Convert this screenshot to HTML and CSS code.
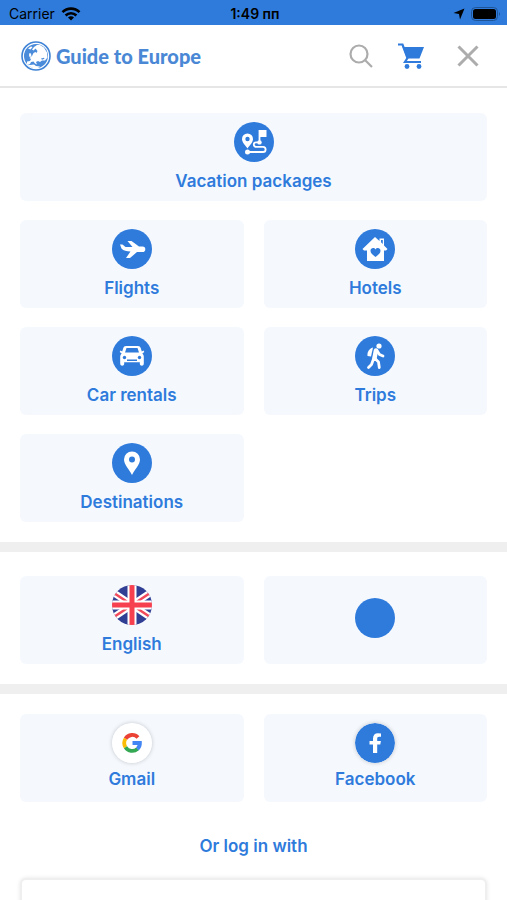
FILE: index.html
```html
<!DOCTYPE html>
<html lang="en">
<head>
    <meta charset="UTF-8">
    <meta name="viewport" content="width=device-width, initial-scale=1.0">
    <title>Guide to Europe</title>
    <link rel="stylesheet" href="styles.css">
</head>
<body>
    <div class="screen">
        <div class="status-bar">
            <div class="status-left">
                <span>Carrier</span>
                <svg width="20" height="14" viewBox="0 0 20 14" fill="none" stroke="#000" stroke-width="2.6">
                    <path d="M1.5 5.2a12 12 0 0 1 17 0M4.6 8.5a7.6 7.6 0 0 1 10.8 0"/>
                    <path d="M10 13.6l-3-3a4.2 4.2 0 0 1 6 0z" fill="#000" stroke="none"/>
                </svg>
            </div>
            <span class="status-time">1:49 пп</span>
            <div class="status-right">
                <svg width="12" height="12" viewBox="0 0 12 12"><path d="M11.5.5L7 11.5l-1-5.500-5.500-1z"/></svg>
                <svg width="30" height="14" viewBox="0 0 30 14">
                    <rect x=".5" y=".5" width="26" height="13" rx="4" fill="none" stroke="#1f5597"/>
                    <rect x="2" y="2" width="23" height="10" rx="2.5"/>
                    <path d="M28 5q2 2 0 4z" fill="#1f5597"/>
                </svg>
            </div>
        </div>

        <header class="header">
            <a href="#" class="logo">
                <svg width="30" height="30" viewBox="0 0 30 30">
                    <circle cx="15" cy="15" r="14" fill="#fff" stroke="#3f83d6" stroke-width="1.6"/>
                    <circle cx="15" cy="15" r="12" fill="#4a8bda"/>
                    <path d="M16 4l3 0 4 2.500 3 5 .5 5-2.500 3-3 0-2 1.500-2-1-2 1 1 2.500-2-1-1.500-2-2.500.5-1 2-3 .5 0-3 3-.5 1-2-1.500-1 2.500-2 1.500-3 2-1 1 1 1-2-2-2.500-2 2-1.500-1 2-2.500z" fill="#fff"/>
                    <path d="M7 7.500l3-2 1.500.5-2 2.500zM8.500 12l1.500.5.5 3-2 .5-.5-2zM6 23l3 1 4-.5 2 1.500 4 .5-2 1.500-5 0-4-2z" fill="#fff"/>
                    <path d="M20 17.500l3-.8.5 1-2.500 1z" fill="#4a8bda"/>
                </svg>
                <span>Guide to Europe</span>
            </a>
            <nav class="header-actions">
                <button type="button" aria-label="Search">
                    <svg width="24" height="24" viewBox="0 0 24 24" fill="none" stroke="#acacac" stroke-width="2.2">
                        <circle cx="10" cy="10" r="8.5"/>
                        <path d="M16 16l7 7"/>
                    </svg>
                </button>
                <button type="button" aria-label="Cart">
                    <svg width="28" height="26" viewBox="0 0 28 26">
                        <path d="M1 1.500h4.500l5 13.500-2.500 4H24" fill="none" stroke="#2f7bdc" stroke-width="2.2"/>
                        <path d="M5.500 4H27l-4.500 11.500H10z" fill="#2f7bdc"/>
                        <circle cx="10" cy="23.500" r="2.400" fill="#2f7bdc"/>
                        <circle cx="22" cy="23.500" r="2.400" fill="#2f7bdc"/>
                    </svg>
                </button>
                <button type="button" aria-label="Close">
                    <svg width="22" height="22" viewBox="0 0 22 22" stroke="#acacac" stroke-width="3"><path d="M1.500 1.500l19 19M20.500 1.500l-19 19"/></svg>
                </button>
            </nav>
        </header>

        <main>
            <section class="grid menu">
                <a href="#" class="tile wide">
                    <svg class="icon" viewBox="0 0 40 40">
                        <circle cx="20" cy="20" r="20" fill="#2f7bdc"/>
                        <path d="M13.500 11.500A5.500 5.500 0 0 0 8 17c0 3.500 3.500 6.500 5.500 9.500 2-3 5.500-6 5.500-9.500a5.500 5.500 0 0 0-5.500-5.500z" fill="#fff"/>
                        <circle cx="13.500" cy="17" r="2.200" fill="#2f7bdc"/>
                        <path d="M13.500 30H29a2.600 2.600 0 0 0 0-5.200h-7a2.200 2.200 0 0 1 0-4.400h3.500V8" fill="none" stroke="#fff" stroke-width="1.800"/>
                        <path d="M25 8h7.500v7H25z" fill="#fff"/>
                        <circle cx="13.500" cy="30" r="2.500" fill="#fff"/>
                        <circle cx="25.500" cy="20.400" r="2.200" fill="#fff"/>
                    </svg>
                    <span>Vacation packages</span>
                </a>
                <a href="#" class="tile">
                    <svg class="icon" viewBox="0 0 40 40">
                        <circle cx="20" cy="20" r="20" fill="#2f7bdc"/>
                        <path d="M8 15.500h2.500l3 2.500h7l-5-6h4l7.500 5.500h3.500a2.800 2.800 0 0 1 0 5.600H25L18 29h-4l4.500-6.500c-4 0-7-.8-9-3z" fill="#fff"/>
                    </svg>
                    <span>Flights</span>
                </a>
                <a href="#" class="tile">
                    <svg class="icon" viewBox="0 0 40 40">
                        <circle cx="20" cy="20" r="20" fill="#2f7bdc"/>
                        <path d="M20 8l4.500 4V9.500H29v7l3.500 3.500-1.500 1.500h-2V32H12V21.500H9L7.500 20z" fill="#fff"/>
                        <path d="M26 11h1.800v4L26 13.300zM20.500 28c-3-2.600-5-4-5-6.300 0-2.800 3.700-3.600 5-1.200 1.300-2.400 5-1.600 5 1.200 0 2.300-2 3.700-5 6.300z" fill="#2f7bdc"/>
                    </svg>
                    <span>Hotels</span>
                </a>
                <a href="#" class="tile">
                    <svg class="icon" viewBox="0 0 40 40">
                        <circle cx="20" cy="20" r="20" fill="#2f7bdc"/>
                        <path d="M14 10h12c1.500 0 2.300.8 2.700 2l1.100 3.500 1.700-1 .8 1.500-2 1.500c1 1 1.500 2 1.500 3.500v6.500c0 3-4 3-4 0v-1.300H12.200v1.300c0 3-4 3-4 0V21c0-1.500.5-2.500 1.500-3.500L7.700 16l.8-1.500 1.700 1 1.100-3.500c.4-1.200 1.200-2 2.700-2z" fill="#fff"/>
                        <path d="M14.500 12h11l1.500 4.500H13zM15 23.500h10V25H15z" fill="#2f7bdc"/>
                        <circle cx="12.500" cy="21.500" r="1.700" fill="#2f7bdc"/>
                        <circle cx="27.500" cy="21.500" r="1.700" fill="#2f7bdc"/>
                    </svg>
                    <span>Car rentals</span>
                </a>
                <a href="#" class="tile">
                    <svg class="icon" viewBox="0 0 40 40">
                        <circle cx="20" cy="20" r="20" fill="#2f7bdc"/>
                        <circle cx="24" cy="10" r="2.600" fill="#fff"/>
                        <path d="M18 11.500c-4 1-6 5-5.500 8.500l3.500.5z" fill="#fff"/>
                        <g fill="none" stroke="#fff" stroke-linecap="round" stroke-linejoin="round">
                            <path d="M21 14.500l-1.500 7.500" stroke-width="4.500"/>
                            <path d="M22 14.500l2.500 4 3.500 1.500M20 22.500l3.500 3.500.8 5.500M18.500 23l-2 5.500-3 3" stroke-width="2.800"/>
                        </g>
                    </svg>
                    <span>Trips</span>
                </a>
                <a href="#" class="tile">
                    <svg class="icon" viewBox="0 0 40 40">
                        <circle cx="20" cy="20" r="20" fill="#2f7bdc"/>
                        <path d="M20 8.500a8 8 0 0 0-8 8c0 5 5 9.500 8 15.500 3-6 8-10.500 8-15.500a8 8 0 0 0-8-8z" fill="#fff"/>
                        <circle cx="20" cy="16.500" r="3" fill="#2f7bdc"/>
                    </svg>
                    <span>Destinations</span>
                </a>
            </section>

            <section class="grid settings">
                <a href="#" class="tile">
                    <svg class="icon" viewBox="0 0 40 40">
                        <clipPath id="flag"><circle cx="20" cy="20" r="20"/></clipPath>
                        <g clip-path="url(#flag)">
                            <path d="M0 0h40v40H0z" fill="#303e94"/>
                            <path d="M-4 4l48 32M44 4L-4 36" stroke="#fff" stroke-width="7"/>
                            <path d="M-4 4l24 16M44 4L20 20M-4 36l24-16M44 36L20 20" stroke="#f04a5c" stroke-width="2.500"/>
                            <path d="M20 0v40M0 20h40" stroke="#fff" stroke-width="9"/>
                            <path d="M20 0v40M0 20h40" stroke="#f6404f" stroke-width="5"/>
                        </g>
                    </svg>
                    <span>English</span>
                </a>
                <a href="#" class="tile icon-only" aria-label="Currency">
                    <svg class="icon" viewBox="0 0 40 40"><circle cx="20" cy="20" r="20" fill="#2f7bdc"/></svg>
                </a>
            </section>

            <section class="login">
                <div class="grid">
                    <a href="#" class="tile">
                        <svg class="icon raised" viewBox="0 0 40 40">
                            <circle cx="20" cy="20" r="20" fill="#fff"/>
                            <g fill="none" stroke-width="3.800">
                                <path d="M13.500 15.800a7.800 7.800 0 0 1 12.500-1.300" stroke="#ea4335"/>
                                <path d="M13.500 24.200a7.800 7.800 0 0 1 0-8.400" stroke="#fbbc05"/>
                                <path d="M13.500 24.200a7.800 7.800 0 0 0 12 1.600" stroke="#34a853"/>
                                <path d="M20.500 20h7.400a7.800 7.800 0 0 1-2.500 6" stroke="#4285f4"/>
                            </g>
                        </svg>
                        <span>Gmail</span>
                    </a>
                    <a href="#" class="tile">
                        <svg class="icon raised" viewBox="0 0 40 40">
                            <circle cx="20" cy="20" r="20" fill="#2f7bdc"/>
                            <path d="M18 30v-8.500h-3.500V18H18v-2.500c0-3.500 2-5.300 5-5.300l3 .3v3.300h-1.800c-1.700 0-2 .9-2 2.200v2h3.700l-.6 3.500h-3.100V30z" fill="#fff"/>
                        </svg>
                        <span>Facebook</span>
                    </a>
                </div>
                <label class="login-label" for="email">Or log in with</label>
                <input type="email" id="email" class="login-input">
            </section>
        </main>
    </div>
</body>
</html>
```
FILE: styles.css
```css
* {
    box-sizing: border-box;
}

body {
    margin: 0;
    font-family: Inter, 'Liberation Sans', sans-serif;
    background-color: #fff;
    color: #2f7bdc;
}

a {
    color: inherit;
    text-decoration: none;
}

svg {
    display: block;
}

.screen {
    height: 100vh;
    overflow: hidden;
}

.status-bar {
    display: grid;
    grid-template-columns: 1fr auto 1fr;
    align-items: center;
    height: 25px;
    padding: 2px 6px 0 9px;
    background-color: #2f7bdc;
    color: #000;
    font-size: 14px;
}

.status-left, .status-right {
    display: flex;
    align-items: center;
    gap: 6px;
}

.status-right {
    justify-content: flex-end;
}

.status-time {
    font-weight: 600;
}

.header {
    display: flex;
    align-items: center;
    justify-content: space-between;
    height: 63px;
    padding: 0 28px 0 21px;
    border-bottom: 2px solid #e6e6e6;
}

.logo {
    display: flex;
    align-items: center;
    gap: 5px;
    color: #4a88d6;
    font-family: Lato, sans-serif;
    font-size: 20px;
    font-weight: 900;
}

.header-actions {
    display: flex;
    align-items: center;
    gap: 24px;
}

.header-actions button {
    padding: 0;
    border: none;
    background: none;
    cursor: pointer;
}

.header-actions button:last-child {
    margin-left: 8px;
}

.grid {
    display: grid;
    grid-template-columns: 1fr 1fr;
    gap: 19px 20px;
}

.menu {
    padding: 25px 20px 20px;
    border-bottom: 10px solid #efefef;
}

.settings {
    padding: 24px 20px 20px;
    border-bottom: 10px solid #efefef;
}

.login {
    padding: 20px;
}

.tile {
    display: flex;
    flex-direction: column;
    align-items: center;
    gap: 7px;
    height: 88px;
    padding-top: 9px;
    border-radius: 6px;
    background-color: #f5f9fe;
    font-size: 17px;
    font-weight: 600;
    line-height: 24px;
}

.icon-only {
    justify-content: center;
    padding: 0 0 4px;
}

.login .tile {
    gap: 4px;
}

.wide {
    grid-column: span 2;
}

.icon {
    width: 40px;
    height: 40px;
}

.raised {
    border-radius: 50%;
    box-shadow: 0 0 4px rgba(0, 0, 0, 0.2);
}

.login-label {
    display: block;
    margin: 32px 0 20px;
    font-size: 17px;
    font-weight: 600;
    line-height: 24px;
    text-align: center;
}

.login-input {
    display: block;
    width: 100%;
    height: 48px;
    padding: 0 16px;
    border: 2px solid #efefef;
    border-radius: 6px;
    box-shadow: 0 0 4px rgba(0, 0, 0, 0.1);
    font-size: 17px;
}
```
